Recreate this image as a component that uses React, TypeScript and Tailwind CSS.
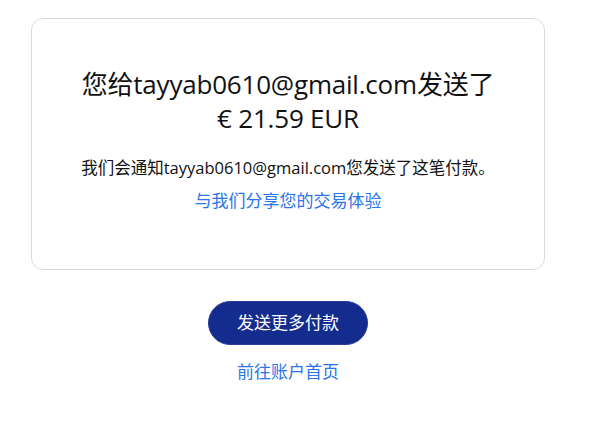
const App = () => {
  return (
    <div
      className="w-[576px] px-[31px] pt-[18px] bg-white text-[#001435]"
      style={{ fontFamily: '"Open Sans", "Noto Sans CJK SC", sans-serif' }}
    >
      {/* Confirmation card */}
      <div className="h-[252px] rounded-xl border border-[#dcd9d1] flex flex-col items-center pt-[48px] text-center">
        <h1 className="text-[26px] leading-[34px] text-[#111] font-normal tracking-[-0.2px]">
          您给tayyab0610@gmail.com发送了
          <br />€ 21.59 EUR
        </h1>
        <p className="mt-[21px] text-[16.5px] leading-[24px] text-[#111]">
          我们会通知tayyab0610@gmail.com您发送了这笔付款。
        </p>
        <a className="mt-[9px] text-[17px] leading-[24px] text-[#2a74ec] cursor-pointer">
          与我们分享您的交易体验
        </a>
      </div>

      {/* Actions */}
      <div className="flex flex-col items-center mt-[31px]">
        <button className="w-[160px] h-[44px] rounded-full bg-[#142c8e] border border-[#2a3f9a] text-white text-[17px]">
          发送更多付款
        </button>
        <a className="mt-[15px] text-[17px] leading-[24px] text-[#2a74ec] cursor-pointer">
          前往账户首页
        </a>
      </div>
    </div>
  );
};

export default App;
